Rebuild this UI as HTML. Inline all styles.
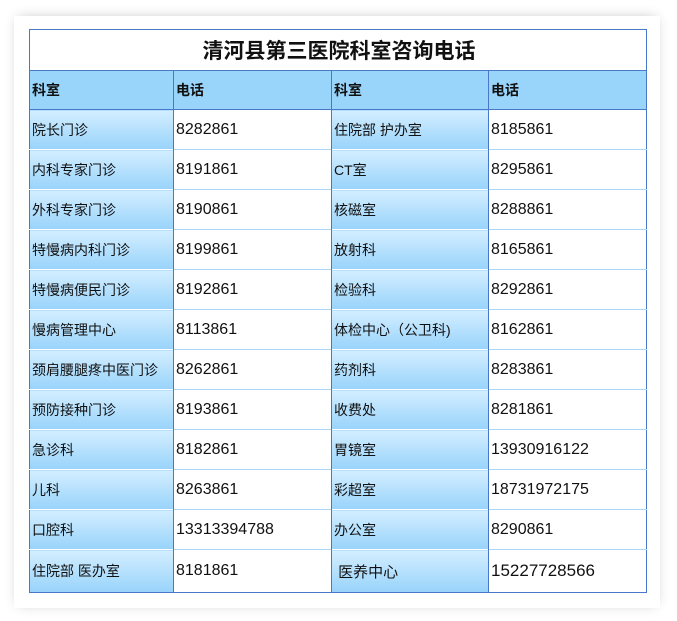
<!DOCTYPE html>
<html><head><meta charset="utf-8"><style>
body{margin:0;width:677px;height:621px;background:#fff;position:relative;overflow:hidden;font-family:"Liberation Sans","Noto Sans CJK SC",sans-serif;}
.sh{position:absolute;left:22px;top:22px;width:630px;height:578px;box-shadow:0 0 12px 4px rgba(0,0,0,.25);background:#fff;}
.sh2{position:absolute;left:14px;top:16px;width:646px;height:592px;background:#fff;}
table{position:absolute;left:29px;top:29px;border-collapse:collapse;width:618px;border:1px solid #4a78c8;}
td{height:39px;padding:0 0 0 2px;font-size:14px;color:#111;border-top:1px solid #a9d8f8;}
td.c:not(.k){font-size:16px;}
.t{height:40px;text-align:center;font-weight:bold;font-size:21px;border-top:none;background:#fff;}
tr.h td{background:#99d5fb;font-weight:bold;font-size:14px!important;border-top:1px solid #4a78c8;border-bottom:1px solid #4a78c8;height:38px;}
td.k{background:linear-gradient(#d3eeff,#98d3fb);border-top:1px solid #fff;}
td.c{border-left:1px solid #4a78c8;}
</style></head><body>
<div class="sh"></div><div class="sh2"></div>
<table>
<colgroup><col style="width:144px"><col style="width:158px"><col style="width:157px"><col style="width:158px"></colgroup>
<tr><td colspan="4" class="t">清河县第三医院科室咨询电话</td></tr>
<tr class="h"><td>科室</td><td class="c">电话</td><td class="c">科室</td><td class="c">电话</td></tr>
<tr><td class="k">院长门诊</td><td class="c">8282861</td><td class="k c">住院部 护办室</td><td class="c">8185861</td></tr>
<tr><td class="k">内科专家门诊</td><td class="c">8191861</td><td class="k c">CT室</td><td class="c">8295861</td></tr>
<tr><td class="k">外科专家门诊</td><td class="c">8190861</td><td class="k c">核磁室</td><td class="c">8288861</td></tr>
<tr><td class="k">特慢病内科门诊</td><td class="c">8199861</td><td class="k c">放射科</td><td class="c">8165861</td></tr>
<tr><td class="k">特慢病便民门诊</td><td class="c">8192861</td><td class="k c">检验科</td><td class="c">8292861</td></tr>
<tr><td class="k">慢病管理中心</td><td class="c">8113861</td><td class="k c">体检中心（公卫科)</td><td class="c">8162861</td></tr>
<tr><td class="k">颈肩腰腿疼中医门诊</td><td class="c">8262861</td><td class="k c">药剂科</td><td class="c">8283861</td></tr>
<tr><td class="k">预防接种门诊</td><td class="c">8193861</td><td class="k c">收费处</td><td class="c">8281861</td></tr>
<tr><td class="k">急诊科</td><td class="c">8182861</td><td class="k c">胃镜室</td><td class="c">13930916122</td></tr>
<tr><td class="k">儿科</td><td class="c">8263861</td><td class="k c">彩超室</td><td class="c">18731972175</td></tr>
<tr><td class="k">口腔科</td><td class="c">13313394788</td><td class="k c">办公室</td><td class="c">8290861</td></tr>
<tr><td class="k" style="height:42px">住院部 医办室</td><td class="c">8181861</td><td class="k c" style="font-size:15px">&nbsp;医养中心</td><td class="c" style="font-size:17px">15227728566</td></tr>
</table>
</body></html>
